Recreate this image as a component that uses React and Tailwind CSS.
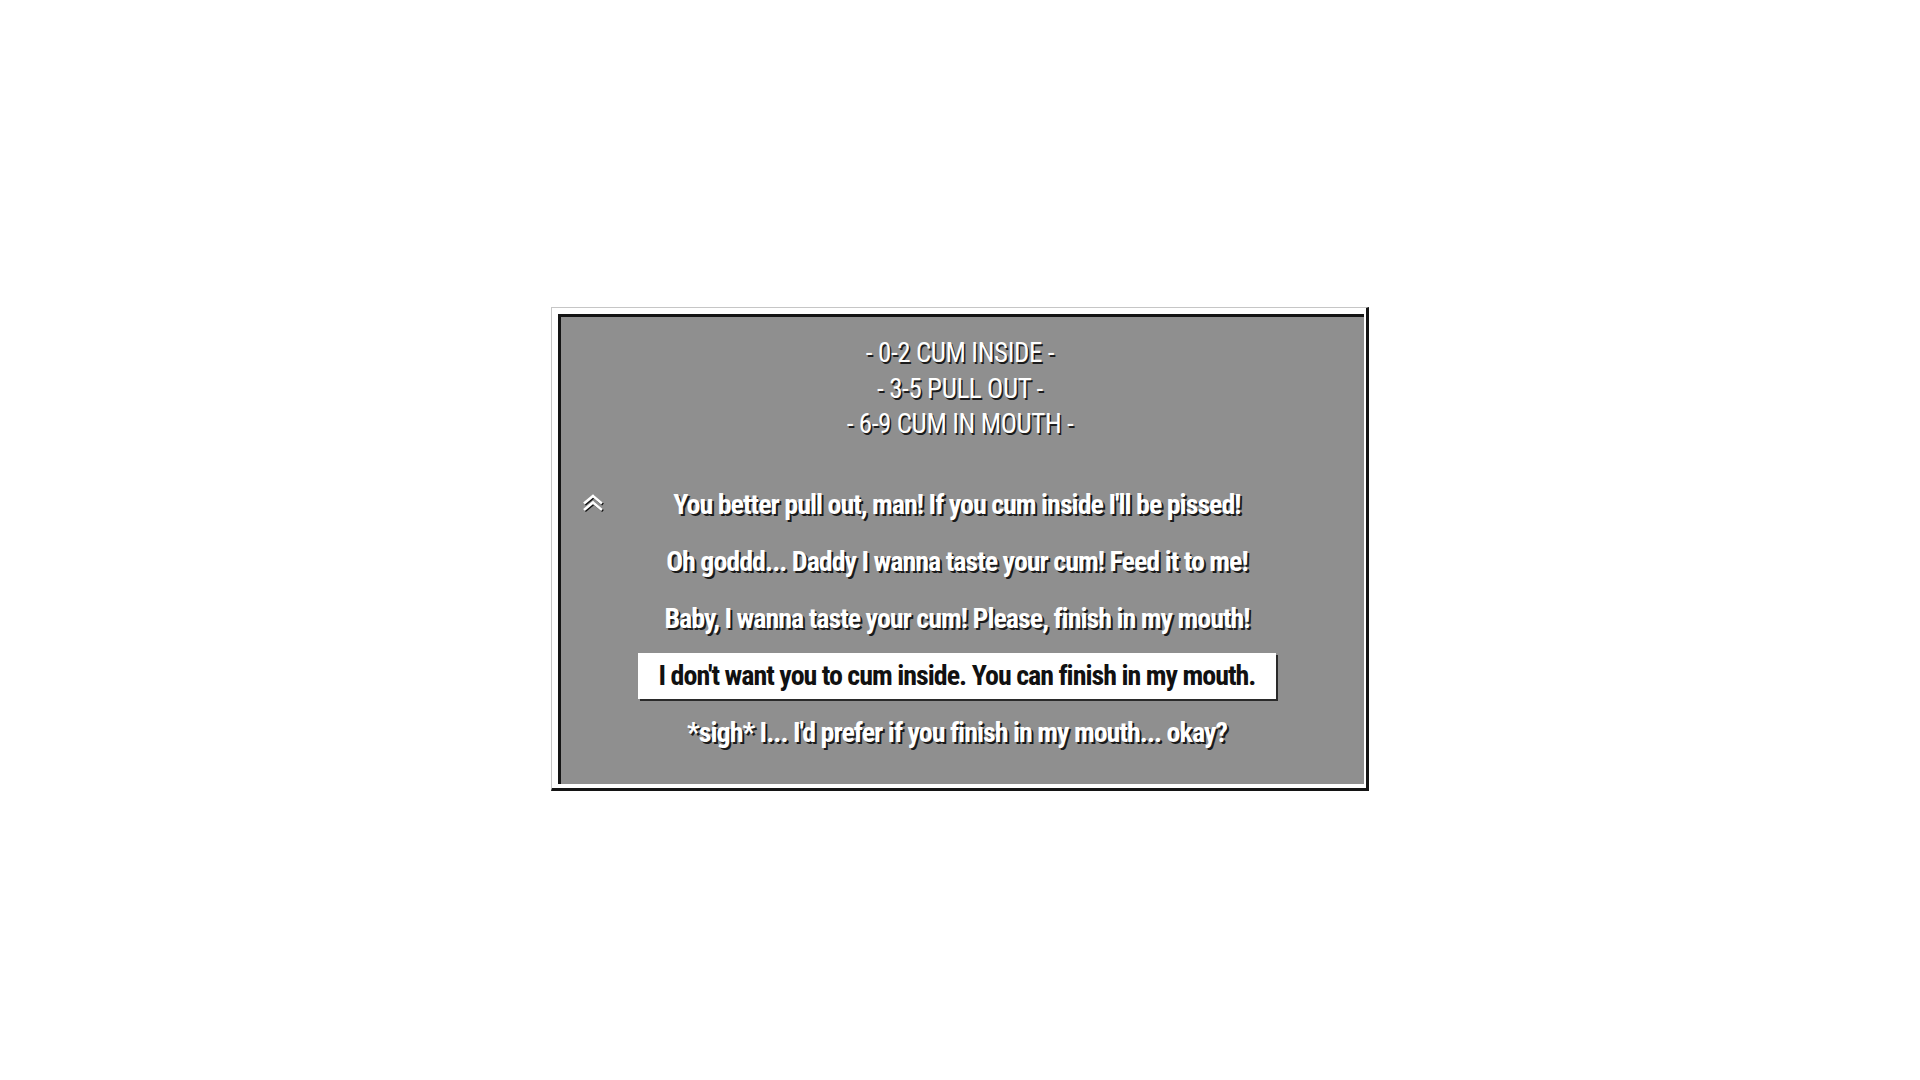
import React from "react";

const choices = [
  "You better pull out, man! If you cum inside I'll be pissed!",
  "Oh goddd... Daddy I wanna taste your cum! Feed it to me!",
  "Baby, I wanna taste your cum! Please, finish in my mouth!",
  "I don't want you to cum inside. You can finish in my mouth.",
  "*sigh* I... I'd prefer if you finish in my mouth... okay?",
];

const selected = 3;

const ChevronsUp = () => (
  <svg
    width="22"
    height="18"
    viewBox="0 0 22 18"
    fill="none"
    className="[filter:drop-shadow(1px_1px_0_#111)]"
  >
    <path d="M2 9.5 L11 2 L20 9.5" stroke="#fff" strokeWidth="2.6" strokeLinejoin="miter" />
    <path d="M2 16 L11 8.5 L20 16" stroke="#fff" strokeWidth="2.6" strokeLinejoin="miter" />
  </svg>
);

const App = () => {
  return (
    <div className="min-h-screen bg-white pt-[307px] font-['Roboto_Condensed','Liberation_Sans_Narrow',Roboto,sans-serif]">
      <div className="mx-auto w-[818px] border-l border-t border-[#c6c6c6] border-r-[3px] border-b-[3px] border-r-[#141414] border-b-[#141414] bg-white pl-[6px] pt-[6px] pr-[2px] pb-[4px]">
        <div className="relative border-l-[3px] border-t-[3px] border-[#141414] bg-[#8f8f8f] pt-[19px] pb-[28px]">
          <div className="flex flex-col items-center pr-[5px] text-[27px] leading-[35.5px] tracking-[-0.4px] text-white [font-stretch:condensed] [text-shadow:1.5px_1.5px_0_#1c1c1c]">
            <p>- 0-2 CUM INSIDE -</p>
            <p>- 3-5 PULL OUT -</p>
            <p>- 6-9 CUM IN MOUTH -</p>
          </div>

          <div className="mt-[39.5px] flex flex-col items-center gap-[11px] pr-[11px]">
            {choices.map((text, i) => (
              <div key={i} className="relative flex h-[46px] w-full items-center justify-center">
                {i === 0 && (
                  <div className="absolute left-[21px] top-[12px]">
                    <ChevronsUp />
                  </div>
                )}
                {i === selected ? (
                  <div className="flex h-[46px] items-center bg-white px-[21px] text-[28px] font-bold tracking-[-1px] text-[#111] [font-stretch:condensed] shadow-[2px_2px_0_#2a2a2a]">
                    {text}
                  </div>
                ) : (
                  <div className="text-[28px] font-bold tracking-[-1px] text-white [font-stretch:condensed] [text-shadow:2px_2px_0_#1a1a1a]">
                    {text}
                  </div>
                )}
              </div>
            ))}
          </div>
        </div>
      </div>
    </div>
  );
};

export default App;
